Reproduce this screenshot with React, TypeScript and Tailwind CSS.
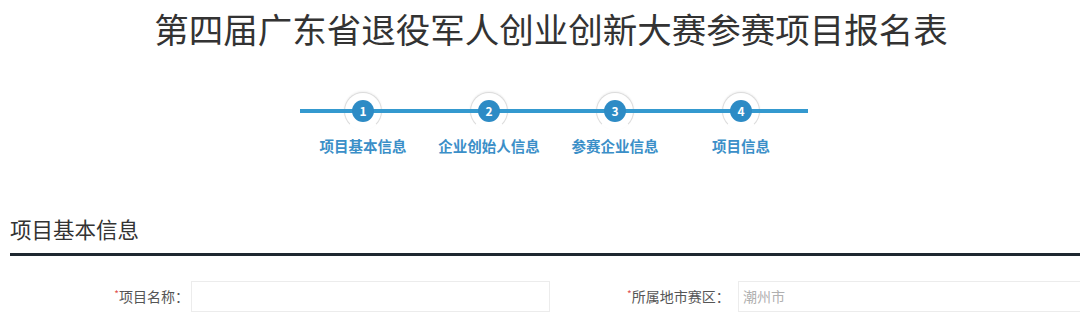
const steps = ["项目基本信息", "企业创始人信息", "参赛企业信息", "项目信息"];

export default function App() {
  return (
    <div
      className="w-[1080px] h-[328px] overflow-hidden bg-white"
      style={{ fontFamily: '"Microsoft YaHei", "Noto Sans CJK SC", "Noto Sans", sans-serif' }}
    >
      <h1 className="pt-[8px] pl-[22px] text-center text-[34.5px] leading-[40px] font-normal text-[#333]">
        第四届广东省退役军人创业创新大赛参赛项目报名表
      </h1>

      {/* stepper */}
      <div className="relative mt-[44px] ml-[300px] flex w-[508px]">
        <div className="absolute left-0 right-0 top-[17px] z-10 h-[4px] bg-[#3499cf]" />
        {steps.map((s, i) => (
          <div key={s} className="flex w-[126px] flex-col items-center">
            <div className="relative h-[38px] w-[38px]">
              <div className="absolute inset-0 rounded-full border border-[#dcdcdc] border-b-transparent bg-white shadow-[0_-1px_2px_rgba(0,0,0,0.06)]" />
              <div className="absolute left-[8px] top-[8px] z-20 flex h-[22px] w-[22px] items-center justify-center rounded-full bg-[#2d8bc5] text-[12px] font-bold text-white">
                {i + 1}
              </div>
            </div>
            <div className="mt-[6px] text-[14.5px] leading-[20px] font-bold text-[#3b8fc8]">{s}</div>
          </div>
        ))}
      </div>

      {/* section */}
      <div className="mt-[59px] pl-[10px]">
        <h2 className="text-[21.5px] leading-[28px] font-normal text-[#333]">项目基本信息</h2>
        <div className="mt-[10px] h-[3px] bg-[#1e2830]" />
      </div>

      <div className="mt-[25px] flex items-center text-[14px] text-[#555]">
        <label className="w-[191px] shrink-0 pr-[2px] text-right">
          <span className="text-[10px] text-[#e05050] align-top">*</span>项目名称：
        </label>
        <div className="h-[31px] w-[359px] shrink-0 border border-[#ececec] bg-white" />
        <label className="ml-[77px] w-[111px] shrink-0">
          <span className="text-[10px] text-[#e05050] align-top">*</span>所属地市赛区：
        </label>
        <div className="flex h-[31px] w-[360px] shrink-0 items-center border border-[#ececec] bg-white pl-[4px] text-[14px] text-[#b0b0b0]">
          潮州市
        </div>
      </div>
    </div>
  );
}
